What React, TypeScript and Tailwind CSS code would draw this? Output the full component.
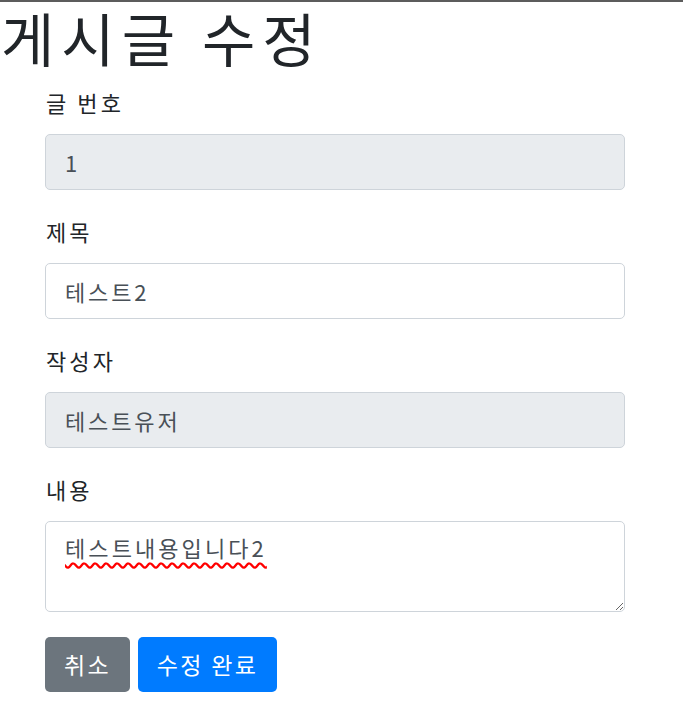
import React, { useState } from 'react';

const fieldClass =
    'block w-full h-[56px] px-[19px] border border-[#ced4da] rounded-[5px] text-[22px] tracking-[0.13em] text-[#495057] outline-none';

const labelClass = 'block text-[22px] leading-[30px] tracking-[0.14em] mb-[17px] pl-[1px]';

const App: React.FC = () => {
    const [title, setTitle] = useState('테스트2');
    const [content, setContent] = useState('테스트내용입니다2');

    return (
        <div className="min-h-[709px] bg-white border-t-2 border-[#5c5c5c] text-[#212529] font-['Noto_Sans_CJK_KR','Noto_Sans',sans-serif]">
            <h1 className="text-[58px] leading-[80px] tracking-[0.12em] font-normal pl-[1px] -mt-[5px]">게시글 수정</h1>

            <form className="ml-[45px] w-[580px] mt-[10px]" onSubmit={e => e.preventDefault()}>
                <div className="mb-[26px]">
                    <label className={labelClass}>글 번호</label>
                    <input type="text" value="1" readOnly className={`${fieldClass} bg-[#e9ecef]`} />
                </div>
                <div className="mb-[26px]">
                    <label className={labelClass}>제목</label>
                    <input type="text" value={title} onChange={e => setTitle(e.target.value)} className={`${fieldClass} bg-white`} />
                </div>
                <div className="mb-[26px]">
                    <label className={labelClass}>작성자</label>
                    <input type="text" value="테스트유저" readOnly className={`${fieldClass} bg-[#e9ecef]`} />
                </div>
                <div className="mb-[25px]">
                    <label className={labelClass}>내용</label>
                    <textarea
                        value={content}
                        onChange={e => setContent(e.target.value)}
                        className="block w-full h-[91px] px-[19px] py-[9px] border border-[#ced4da] rounded-[5px] text-[22px] leading-[33px] tracking-[0.14em] text-[#495057] bg-white outline-none underline decoration-wavy decoration-[#ff0000] underline-offset-[5px]"
                    />
                </div>
                <div className="flex gap-[8px]">
                    <button type="button" className="h-[55px] w-[85px] rounded-[5px] bg-[#6c757d] text-white text-[23px] tracking-[0.1em]">취소</button>
                    <button type="submit" className="h-[55px] w-[139px] rounded-[5px] bg-[#007bff] text-white text-[23px] tracking-[0.1em]">수정 완료</button>
                </div>
            </form>
        </div>
    );
};

export default App;
